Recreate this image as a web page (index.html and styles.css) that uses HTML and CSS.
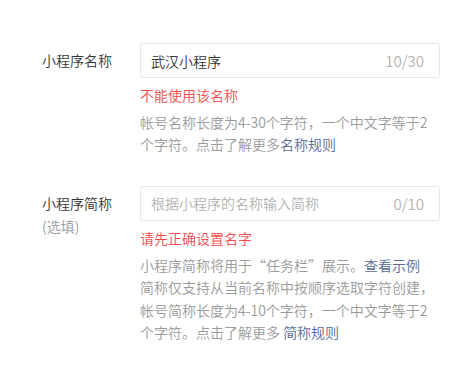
FILE: index.html
```html
<!DOCTYPE html>
<html lang="zh-CN">
<head>
<meta charset="utf-8">
<link rel="stylesheet" href="styles.css">
</head>
<body>
<div class="form">
  <div class="row">
    <div class="label"><div>小程序名称</div></div>
    <div class="field">
      <div class="input">
        <span class="value">武汉小程序</span>
        <span class="count">10/30</span>
      </div>
      <div class="error">不能使用该名称</div>
      <div class="help">帐号名称长度为4-30个字符，一个中文字等于2个字符。点击了解更多<a class="link">名称规则</a></div>
    </div>
  </div>
  <div class="row">
    <div class="label"><div>小程序简称</div><div class="optional">(选填)</div></div>
    <div class="field">
      <div class="input">
        <span class="placeholder">根据小程序的名称输入简称</span>
        <span class="count">0/10</span>
      </div>
      <div class="error">请先正确设置名字</div>
      <div class="help">小程序简称将用于“任务栏”展示。<a class="link">查看示例</a><br>简称仅支持从当前名称中按顺序选取字符创建，帐号简称长度为4-10个字符，一个中文字等于2个字符。点击了解更多 <a class="link">简称规则</a></div>
    </div>
  </div>
</div>
</body>
</html>
```
FILE: styles.css
```css
html, body {
  margin: 0;
  padding: 0;
  background: #ffffff;
}
body {
  font-family: "Microsoft YaHei", "Noto Sans CJK SC", "Noto Sans", sans-serif;
  font-size: 14px;
  font-weight: 350;
  color: #353535;
}
.form {
  padding: 43px 0 0 42px;
  display: flex;
  flex-direction: column;
  gap: 30px;
}
.row {
  display: flex;
}
.label {
  width: 98px;
  padding-top: 6px;
  line-height: 23px;
  color: #353535;
}
.optional {
  color: #9a9a9a;
}
.field {
  width: 300px;
}
.input {
  box-sizing: border-box;
  height: 35px;
  border: 1px solid #e5e6eb;
  border-radius: 3px;
  display: flex;
  align-items: center;
  justify-content: space-between;
  padding: 0 15px 0 10px;
}
.value {
  color: #353535;
}
.placeholder {
  color: #b2b2b2;
}
.count {
  color: #b2b2b2;
  font-size: 15px;
}
.error {
  margin-top: 6px;
  line-height: 22px;
  color: #f04d4d;
}
.help {
  margin-top: 5px;
  line-height: 22.4px;
  color: #9a9a9a;
}
.link {
  color: #576b95;
  text-decoration: none;
}
```
